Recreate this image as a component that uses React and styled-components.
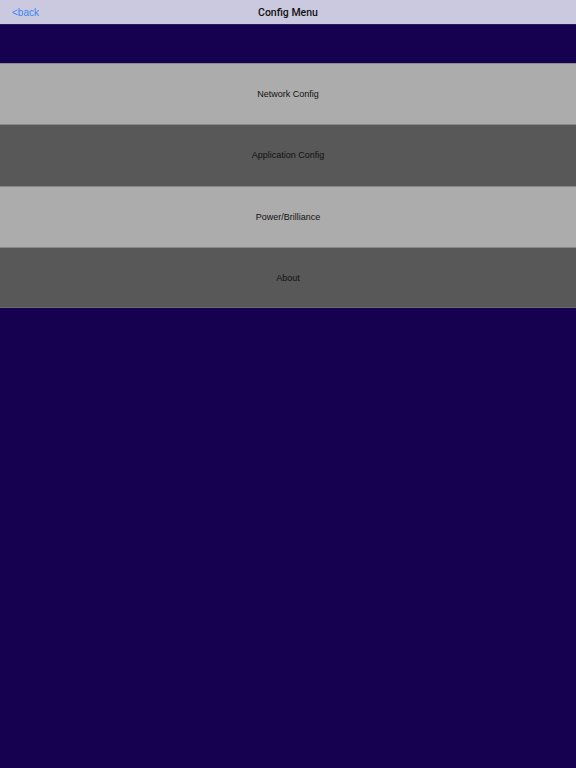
import React from "react";
import styled, { createGlobalStyle } from "styled-components";

const menuItems = [
  { title: "Network Config", shade: "light" },
  { title: "Application Config", shade: "dark" },
  { title: "Power/Brilliance", shade: "light" },
  { title: "About", shade: "dark" },
];

const GlobalStyle = createGlobalStyle`
  html, body {
    margin: 0;
    padding: 0;
    height: 100%;
    background: #160050;
  }
  #root {
    min-height: 100%;
  }
  * {
    box-sizing: border-box;
  }
`;

const App = () => {
  return (
    <>
      <GlobalStyle />
      <Page>
        <NavBar>
          <BackButton>&lt;back</BackButton>
          <Title>Config Menu</Title>
        </NavBar>
        <Menu>
          {menuItems.map((item) => (
            <MenuRow key={item.title} shade={item.shade}>
              {item.title}
            </MenuRow>
          ))}
        </Menu>
      </Page>
    </>
  );
};

const Page = styled.div`
  width: 576px;
  height: 768px;
  background-color: #160050;
  font-family: "Liberation Sans", Arial, sans-serif;
  display: flex;
  flex-direction: column;
`;

const NavBar = styled.header`
  position: relative;
  height: 25px;
  background-color: #cbc9df;
  border-bottom: 1px solid #2a1a5e;
  display: flex;
  align-items: center;
  justify-content: center;
`;

const BackButton = styled.span`
  position: absolute;
  left: 12px;
  top: 50%;
  transform: translateY(-50%);
  font-size: 10px;
  color: #3b84f5;
  cursor: pointer;
`;

const Title = styled.h1`
  margin: 0;
  font-family: Roboto, "Liberation Sans", sans-serif;
  font-size: 10.5px;
  font-weight: 500;
  color: #111;
`;

const Menu = styled.nav`
  margin-top: 38px;
  display: flex;
  flex-direction: column;
`;

const MenuRow = styled.div`
  height: 61.3px;
  display: flex;
  align-items: center;
  justify-content: center;
  font-size: 9px;
  color: #111;
  background-color: ${({ shade }) => (shade === "light" ? "#acacac" : "#585858")};
  border-top: 1px solid #8a8a8a;
  cursor: pointer;
  &:last-of-type {
    border-bottom: 1px solid #6a6a6a;
  }
`;

export default App;
